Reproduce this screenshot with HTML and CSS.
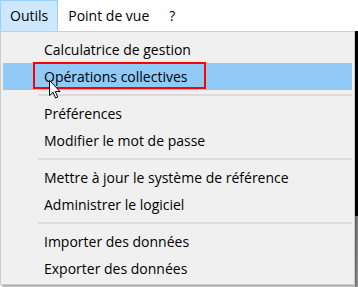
FILE: index.html
```html
<!DOCTYPE html>
<html lang="fr">
<head>
    <meta charset="UTF-8">
    <title>Menu Outils</title>
    <link rel="stylesheet" href="styles.css">
</head>
<body>
    <div class="screen">
        <div class="menubar">
            <span class="menubar-item active">Outils</span>
            <span class="menubar-item">Point de vue</span>
            <span class="menubar-item">?</span>
        </div>

        <div class="edge"></div>

        <ul class="dropdown">
            <li class="menu-item">Calculatrice de gestion</li>
            <li class="menu-item hover">
                Opérations collectives
                <span class="annot"></span>
                <svg class="cursor" width="12" height="19" viewBox="0 0 12 19">
                    <path d="M0.5 0.5 L0.5 15.5 L4 12.2 L6.5 18 L8.7 17 L6.3 11.5 L11 11.5 Z" fill="#fff" stroke="#000" stroke-width="1" stroke-linejoin="miter"/>
                </svg>
            </li>
            <li class="separator"></li>
            <li class="menu-item">Préférences</li>
            <li class="menu-item">Modifier le mot de passe</li>
            <li class="separator"></li>
            <li class="menu-item">Mettre à jour le système de référence</li>
            <li class="menu-item">Administrer le logiciel</li>
            <li class="separator"></li>
            <li class="menu-item">Importer des données</li>
            <li class="menu-item">Exporter des données</li>
        </ul>
    </div>
</body>
</html>
```

FILE: styles.css
```css
body {
    margin: 0;
    font-family: "Open Sans", "Noto Sans", sans-serif;
    font-size: 14px;
    color: #000;
    background-color: #fff;
}
.screen {
    position: relative;
    width: 358px;
    height: 287px;
    overflow: hidden;
}
.menubar {
    display: flex;
    height: 31px;
    background-color: #fff;
}
.menubar-item {
    padding: 0 9px;
    line-height: 29px;
    border: 1px solid transparent;
}
.menubar-item.active {
    background-color: #cce8ff;
    border-color: #99d1ff;
    border-bottom: none;
}
/* dark window behind the menu */
.edge {
    position: absolute;
    left: 355px;
    top: 31px;
    width: 3px;
    height: 256px;
    background: linear-gradient(#000 0, #000 185px, #8c8c8c 185px, #a6a6a6 100%);
}
.dropdown {
    position: absolute;
    left: 0;
    top: 31px;
    width: 349px;
    margin: 0;
    padding: 4px 2px 2px 2px;
    list-style: none;
    background-color: #f0f0f0;
    border: 1px solid #cccccc;
    box-shadow: 2px 2px 2px rgba(0, 0, 0, 0.35);
}
.menu-item {
    position: relative;
    height: 27px;
    line-height: 27px;
    padding-left: 41px;
    white-space: nowrap;
}
.menu-item.hover {
    background-color: #91c9f7;
}
.annot {
    position: absolute;
    left: 30px;
    top: -1px;
    width: 169px;
    height: 23px;
    border: 2px solid #ff0000;
}
.cursor {
    position: absolute;
    left: 46px;
    top: 17px;
}
.separator {
    height: 2px;
    margin: 4px 0 4px 35px;
    background-color: #dcdcdc;
}
```
